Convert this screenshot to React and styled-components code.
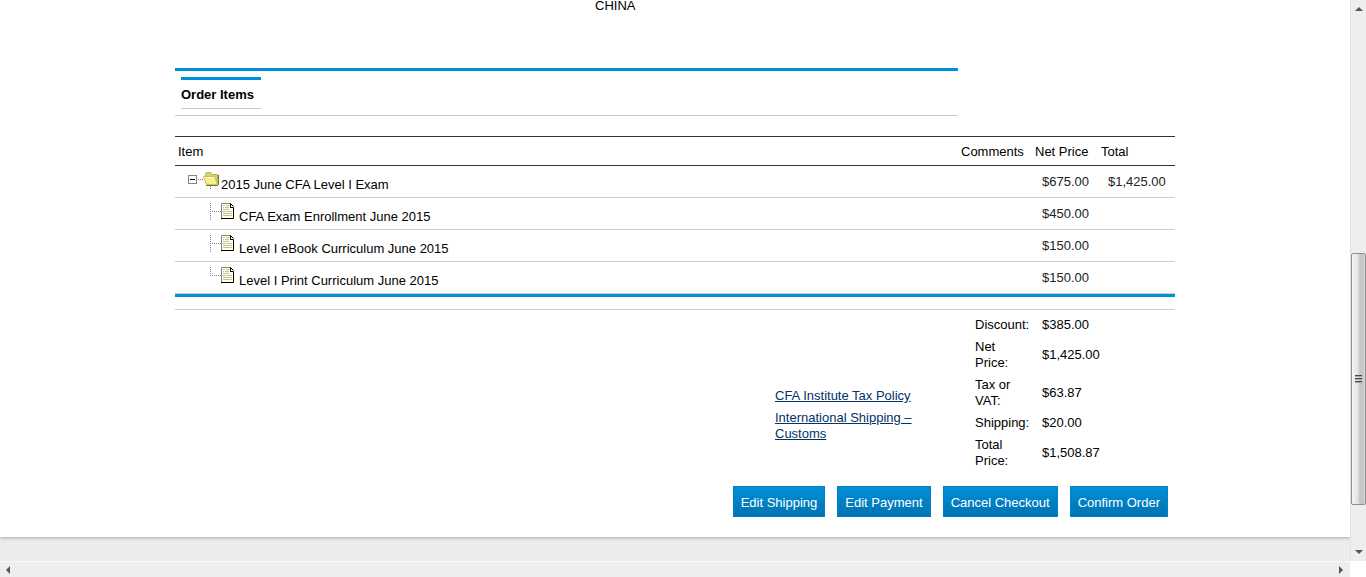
import React from "react";
import styled, { createGlobalStyle } from "styled-components";

const items = [
    { name: "2015 June CFA Level I Exam", net: "$675.00", total: "$1,425.00", kind: "folder" },
    { name: "CFA Exam Enrollment June 2015", net: "$450.00", kind: "page" },
    { name: "Level I eBook Curriculum June 2015", net: "$150.00", kind: "page" },
    { name: "Level I Print Curriculum June 2015", net: "$150.00", kind: "page", last: true },
];

const totals = [
    ["Discount:", "$385.00"],
    ["Net Price:", "$1,425.00"],
    ["Tax or VAT:", "$63.87"],
    ["Shipping:", "$20.00"],
    ["Total Price:", "$1,508.87"],
];

const actions = ["Edit Shipping", "Edit Payment", "Cancel Checkout", "Confirm Order"];

const FolderIcon = () => (
    <svg width="33" height="20" viewBox="0 0 33 20" aria-hidden="true">
        <rect x="0.5" y="5.5" width="8" height="8" fill="#fff" stroke="#848484" />
        <path d="M2 9.5h5" stroke="#000" />
        <path d="M10 9.5h6M22.5 16v3" stroke="#808080" strokeDasharray="1 1" />
        <path d="M17.5 13V3.5l1-1h4l2 2h5V14" fill="#d6cf6a" stroke="#b9b356" />
        <path d="M15.5 6.5h11l3 8H18.5z" fill="#f6f08c" stroke="#c9c25c" />
        <path d="M17 7.5h9" stroke="#fffccf" />
        <path d="M18 15.5h12M30.5 5v10" fill="none" stroke="#77733a" />
    </svg>
);

const PageIcon = ({ last }) => (
    <svg width="26" height="20" viewBox="0 0 26 20" aria-hidden="true">
        <path d={last ? "M1.5 1v9" : "M1.5 1v18"} stroke="#808080" strokeDasharray="1 1" />
        <path d="M3 9.5h9" stroke="#808080" strokeDasharray="1 1" />
        <path d="M12.5 1.5h8l4 4v11h-12z" fill="#ffffe1" />
        <path d="M12.5 16V1.5h9" fill="none" stroke="#808080" />
        <path d="M12 16.5h12.5V5.5h-3v-4l3 3" fill="none" stroke="#000" />
        <path d="M14 3.5h2M17 3.5h3M14 5.5h1M16 5.5h4M14 7.5h6M14 9.5h3M18 9.5h5M14 11.5h9M14 13.5h9" stroke="#c0c0b0" />
    </svg>
);

const Arrow = ({ d }) => (
    <svg width="8" height="8" viewBox="0 0 8 8" aria-hidden="true">
        <path d={d} fill="#555" />
    </svg>
);

export default function App() {
    return (
        <Window>
            <GlobalStyle />
            <Viewport>
                <Page>
                    <Content>
                        <Address>CHINA</Address>
                        <TabBar>
                            <Tab>Order Items</Tab>
                        </TabBar>
                        <ItemsTable>
                            <thead>
                                <tr>
                                    <ItemHead>Item</ItemHead>
                                    <Head $width={74}>Comments</Head>
                                    <Head $width={66}>Net Price</Head>
                                    <Head $width={80}>Total</Head>
                                </tr>
                            </thead>
                            <tbody>
                                {items.map((item) => (
                                    <tr key={item.name}>
                                        <ItemCell>
                                            <TreeNode $child={item.kind === "page"}>
                                                {item.kind === "folder" ? <FolderIcon /> : <PageIcon last={item.last} />}
                                                <span>{item.name}</span>
                                            </TreeNode>
                                        </ItemCell>
                                        <PriceCell />
                                        <PriceCell>{item.net}</PriceCell>
                                        <PriceCell>{item.total}</PriceCell>
                                    </tr>
                                ))}
                            </tbody>
                        </ItemsTable>
                        <Summary>
                            <Policies>
                                <a href="#tax">CFA Institute Tax Policy</a>
                                <a href="#shipping">International Shipping – Customs</a>
                            </Policies>
                            <Totals>
                                <tbody>
                                    {totals.map(([label, value]) => (
                                        <tr key={label}>
                                            <th scope="row">{label}</th>
                                            <td>{value}</td>
                                        </tr>
                                    ))}
                                </tbody>
                            </Totals>
                        </Summary>
                        <Actions>
                            {actions.map((label) => (
                                <Button key={label} type="button">{label}</Button>
                            ))}
                        </Actions>
                    </Content>
                </Page>
                <Footer />
            </Viewport>
            <VerticalBar>
                <Arrow d="M4 2l4 4H0z" />
                <Track>
                    <Thumb>
                        <svg width="7" height="8" viewBox="0 0 7 8" aria-hidden="true">
                            <path d="M0 .5h7M0 3.5h7M0 6.5h7" stroke="#444" />
                            <path d="M0 1.5h7M0 4.5h7M0 7.5h7" stroke="#aaa" />
                        </svg>
                    </Thumb>
                </Track>
                <Arrow d="M0 2h8L4 6z" />
            </VerticalBar>
            <HorizontalBar>
                <Arrow d="M5 0v8L1 4z" />
                <Arrow d="M2 0l4 4-4 4z" />
            </HorizontalBar>
            <Corner />
        </Window>
    );
}

const GlobalStyle = createGlobalStyle`
    * {
        box-sizing: border-box;
    }

    body {
        margin: 0;
        background: #fff;
        color: #000;
        font: 13px/16px "Liberation Sans", Arial, sans-serif;
    }
`;

const Window = styled.div`
    display: grid;
    grid-template-columns: 1fr 16px;
    grid-template-rows: 1fr 16px;
    min-height: 100vh;
`;

const Viewport = styled.div`
    display: flex;
    flex-direction: column;
    background: #ececec;
`;

const Page = styled.main`
    background: #fff;
    padding-bottom: 20px;
    box-shadow: 0 1px 3px #aaa;
`;

const Content = styled.div`
    max-width: 1000px;
    margin: 0 auto;
`;

const Address = styled.div`
    padding-left: 420px;
    margin-bottom: 56px;
    line-height: 12px;
`;

const TabBar = styled.div`
    display: flex;
    width: 783px;
    max-width: 100%;
    margin-bottom: 20px;
    padding: 6px;
    border-top: 3px solid #008fd9;
    border-bottom: 1px solid #ccc;
`;

const Tab = styled.h2`
    width: 80px;
    margin: 0;
    padding: 7px 0 5px;
    border-top: 3px solid #008fd9;
    border-bottom: 1px solid #ccc;
    font-size: 13px;
    font-weight: bold;
    white-space: nowrap;
`;

const ItemsTable = styled.table`
    width: 100%;
    table-layout: fixed;
    border-spacing: 0;
    border-bottom: 3px solid #008fd9;

    td {
        height: 32px;
        border-bottom: 1px solid #ccc;
    }
`;

const Head = styled.th`
    width: ${(props) => props.$width}px;
    height: 30px;
    padding: 2px 0 0 6px;
    border-top: 1px solid #333;
    border-bottom: 1px solid #333;
    font-weight: normal;
    text-align: left;
    white-space: nowrap;
`;

const ItemHead = styled(Head)`
    width: auto;
    padding-left: 3px;
`;

const ItemCell = styled.td`
    padding: 0;
`;

const TreeNode = styled.div`
    display: flex;
    align-items: flex-start;
    padding-left: ${(props) => (props.$child ? "34px" : "13px")};

    svg {
        flex: none;
        margin-right: ${(props) => (props.$child ? "4px" : "0")};
    }

    span {
        padding-top: 7px;
    }
`;

const PriceCell = styled.td`
    padding: 0 0 0 13px;
    color: #222;
`;

const Summary = styled.section`
    display: flex;
    justify-content: flex-end;
    margin-top: 12px;
    padding-top: 3px;
    border-top: 1px solid #ccc;
`;

const Policies = styled.nav`
    display: flex;
    flex-direction: column;
    gap: 6px;
    width: 200px;
    padding: 75px 40px 0 0;

    a {
        color: #003366;
    }
`;

const Totals = styled.table`
    width: 200px;
    border-spacing: 0;

    th {
        width: 55px;
        padding: 4px 0 2px;
        font-weight: normal;
        text-align: left;
    }

    td {
        padding: 4px 0 2px 12px;
    }
`;

const Actions = styled.div`
    display: flex;
    justify-content: flex-end;
    gap: 12px;
    padding: 15px 7px 0 0;
`;

const Button = styled.button`
    height: 31px;
    padding: 2px 7px 0;
    border: 1px solid #0082c8;
    background: linear-gradient(#008fd9, #0073b1);
    color: #fff;
    font: inherit;
    white-space: nowrap;
`;

const Footer = styled.footer`
    flex: 1;
    min-height: 23px;
`;

const VerticalBar = styled.div`
    display: flex;
    flex-direction: column;
    align-items: center;
    padding: 5px 0;
    background: #eee;
    border-left: 1px solid #e2e2e2;
`;

const Track = styled.div`
    display: grid;
    grid-template-rows: 240fr 252fr 43fr;
    flex: 1;
    width: 100%;
`;

const Thumb = styled.div`
    display: grid;
    grid-row: 2;
    place-items: center;
    border: 1px solid #8e8e8e;
    border-radius: 2px;
    background: linear-gradient(90deg, #f5f5f5, #e2e2e4 45%, #c8c8cc 60%, #c4c4c8 85%, #ddd);
`;

const HorizontalBar = styled.div`
    display: flex;
    align-items: center;
    justify-content: space-between;
    padding: 0 5px;
    border-top: 1px solid #f8f8f8;
    background: #eee;
`;

const Corner = styled.div`
    background: #fff;
`;
